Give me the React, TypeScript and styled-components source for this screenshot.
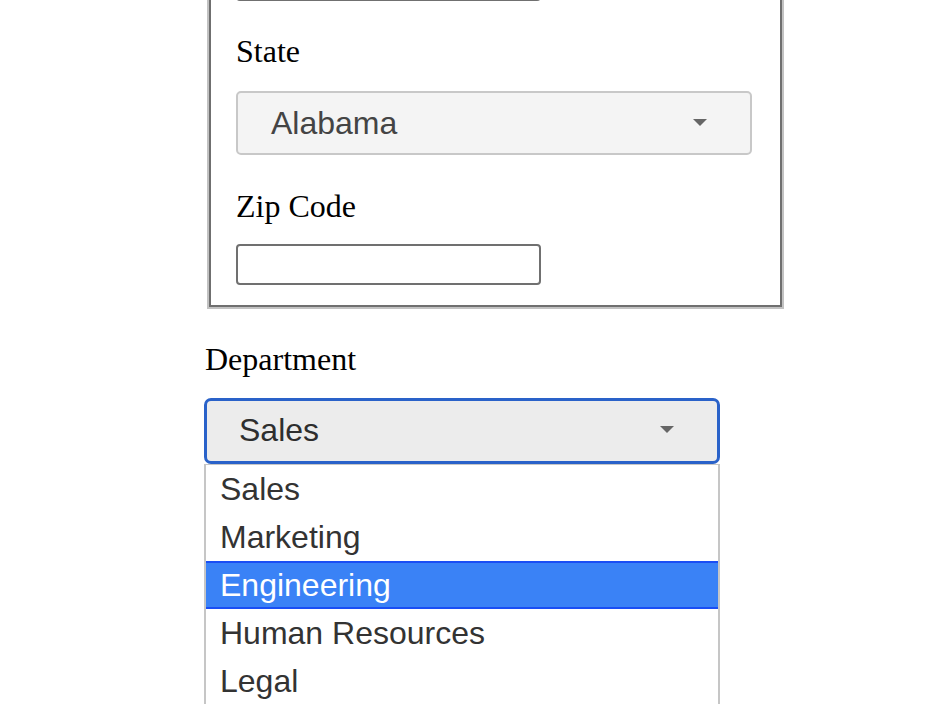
import React from "react";
import styled, { createGlobalStyle } from "styled-components";

const GlobalStyle = createGlobalStyle`
  html, body { margin: 0; padding: 0; background: #ffffff; }
  body { font-family: "Liberation Serif", "Times New Roman", serif; color: #000; }
`;

const Page = styled.div`
  width: 926px;
  height: 704px;
  overflow: hidden;
`;

const Form = styled.form`
  display: flex;
  flex-direction: column;
  align-items: flex-start;
  margin: -60px 0 0 0;
  padding-left: 204px;
`;

const Fieldset = styled.div`
  box-sizing: border-box;
  display: flex;
  flex-direction: column;
  align-items: flex-start;
  width: 577px;
  margin-left: 3px;
  border: 2px solid #c2c2c2;
  box-shadow: inset 0 0 0 2px #6f6f6f;
  padding: 18px 0 22px 27px;
`;

const Label = styled.label<{ $top: number; $indent?: number }>`
  display: block;
  margin-top: ${(p) => p.$top}px;
  margin-left: ${(p) => p.$indent ?? 0}px;
  font-family: "Liberation Serif", "Times New Roman", serif;
  font-size: 32px;
  line-height: 36px;
  color: #000;
`;

const TextInput = styled.div<{ $top?: number }>`
  box-sizing: border-box;
  width: 305px;
  height: 41px;
  margin-top: ${(p) => p.$top ?? 0}px;
  border: 2px solid #707070;
  border-radius: 4px;
  background: #fff;
`;

const SelectBox = styled.div<{ $focused?: boolean; $top: number }>`
  box-sizing: border-box;
  display: flex;
  align-items: center;
  justify-content: space-between;
  width: 516px;
  height: ${(p) => (p.$focused ? 66 : 64)}px;
  margin-top: ${(p) => p.$top}px;
  padding: 0 43px ${(p) => (p.$focused ? 2 : 0)}px ${(p) => (p.$focused ? 32 : 33)}px;
  border: ${(p) => (p.$focused ? "3px solid #2a62c9" : "2px solid #c8c8c8")};
  border-radius: ${(p) => (p.$focused ? 7 : 5)}px;
  background: ${(p) => (p.$focused ? "#ececec" : "#f4f4f4")};
  font-family: "Liberation Sans", Arial, sans-serif;
  font-size: 32px;
  color: ${(p) => (p.$focused ? "#2e2e2e" : "#444444")};
`;

const Arrow = () => (
  <svg width="14" height="8" viewBox="0 0 14 8" aria-hidden="true">
    <polygon points="0,0 14,0 7,7" fill="#666666" />
  </svg>
);

const Dropdown = styled.ul`
  box-sizing: border-box;
  width: 516px;
  margin: 0;
  padding: 0;
  list-style: none;
  border: 2px solid #c6c6c6;
  border-top-width: 1px;
  border-bottom: none;
  background: #fff;
`;

const Option = styled.li<{ $active?: boolean }>`
  box-sizing: border-box;
  height: 48px;
  padding-left: 14px;
  display: flex;
  align-items: center;
  font-family: "Liberation Sans", Arial, sans-serif;
  font-size: 32px;
  color: ${(p) => (p.$active ? "#ffffff" : "#333333")};
  background: ${(p) => (p.$active ? "#3a82f6" : "transparent")};
  border-top: 2px solid ${(p) => (p.$active ? "#1a4ef4" : "transparent")};
  border-bottom: 2px solid ${(p) => (p.$active ? "#1a4ef4" : "transparent")};
`;

const departments = ["Sales", "Marketing", "Engineering", "Human Resources", "Legal"];

export default function App() {
  return (
    <Page>
      <GlobalStyle />
      <Form>
        <Fieldset>
          <TextInput />
          <Label $top={32}>State</Label>
          <SelectBox $top={22}>
            <span>Alabama</span>
            <Arrow />
          </SelectBox>
          <Label $top={33}>Zip Code</Label>
          <TextInput $top={20} />
        </Fieldset>
        <Label $top={32} $indent={1}>Department</Label>
        <SelectBox $focused $top={21}>
          <span>Sales</span>
          <Arrow />
        </SelectBox>
        <Dropdown>
          {departments.map((d) => (
            <Option key={d} $active={d === "Engineering"}>
              {d}
            </Option>
          ))}
        </Dropdown>
      </Form>
    </Page>
  );
}
